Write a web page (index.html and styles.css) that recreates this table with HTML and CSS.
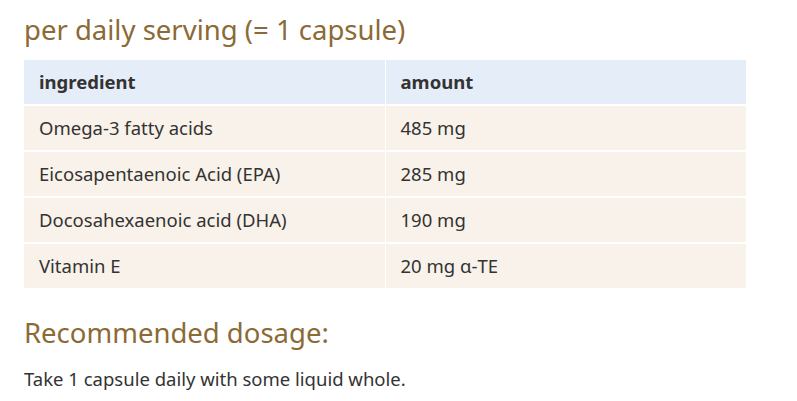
FILE: index.html
```html
<!DOCTYPE html>
<html lang="en">
<head>
<meta charset="utf-8">
<title>Dosage</title>
<link rel="stylesheet" href="styles.css">
</head>
<body>
<main class="content">
  <h2 class="title">per daily serving (= 1 capsule)</h2>
  <table class="nutri">
    <thead>
      <tr><th class="col">ingredient</th><th class="col">amount</th></tr>
    </thead>
    <tbody>
      <tr><td>Omega-3 fatty acids</td><td>485 mg</td></tr>
      <tr><td>Eicosapentaenoic Acid (EPA)</td><td>285 mg</td></tr>
      <tr><td>Docosahexaenoic acid (DHA)</td><td>190 mg</td></tr>
      <tr><td>Vitamin E</td><td>20 mg α-TE</td></tr>
    </tbody>
  </table>
  <h2 class="title title-second">Recommended dosage:</h2>
  <p class="text">Take 1 capsule daily with some liquid whole.</p>
</main>
</body>
</html>
```
FILE: styles.css
```css
html, body {
  margin: 0;
  padding: 0;
  background: #ffffff;
}
body {
  font-family: "Noto Sans", "Open Sans", sans-serif;
  color: #333333;
}
.content {
  padding: 0 24px;
}
.title {
  margin: 13px 0 14px;
  font-size: 27.5px;
  line-height: 33px;
  font-weight: 400;
  color: #8b6a36;
}
.title-second {
  margin: 28px 0 18px;
}
.nutri {
  width: 722px;
  table-layout: fixed;
  border-collapse: separate;
  border-spacing: 0;
  font-size: 18.5px;
  line-height: 24px;
}
.nutri th,
.nutri td {
  padding: 10px 15px;
  text-align: left;
  vertical-align: middle;
  white-space: nowrap;
}
.nutri th {
  background: #e5edf8;
  font-weight: 700;
  color: #333333;
}
.nutri td {
  background: #f9f2ea;
  border-top: 2px solid #ffffff;
}
.nutri th + th,
.nutri td + td {
  border-left: 1px solid #ffffff;
}
.col { width: 50%; }
.text {
  margin: 0;
  font-size: 18.5px;
  line-height: 24px;
}
```
